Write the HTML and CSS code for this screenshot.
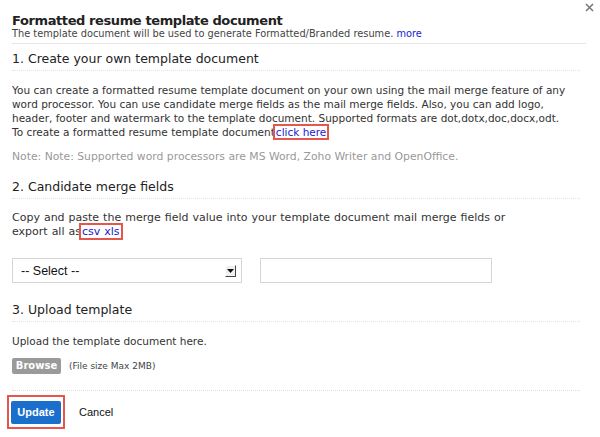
FILE: index.html
```html
<!DOCTYPE html>
<html>
<head>
<meta charset="utf-8">
<link rel="stylesheet" href="styles.css">
</head>
<body>
<div class="dialog">
  <span class="close"><svg width="9" height="9" viewBox="0 0 9 9"><path d="M1 1L8 8M8 1L1 8" stroke="#7a7a7a" stroke-width="1.6"/></svg></span>
  <div class="header">
    <div class="title">Formatted resume template document</div>
    <div class="subtitle">The template document will be used to generate Formatted/Branded resume. <a class="link" href="#">more</a></div>
  </div>

  <div class="sec-head first">1. Create your own template document</div>
  <p class="para">You can create a formatted resume template document on your own using the mail merge feature of any word processor. You can use candidate merge fields as the mail merge fields. Also, you can add logo, header, footer and watermark to the template document. Supported formats are dot,dotx,doc,docx,odt.<br>To create a formatted resume template document<a class="link boxed" href="#">click here</a></p>
  <p class="note">Note: Note: Supported word processors are MS Word, Zoho Writer and OpenOffice.</p>

  <div class="sec-head second">2. Candidate merge fields</div>
  <p class="para copy">Copy and paste the merge field value into your template document mail merge fields or<br>export all as<a class="link boxed" href="#">csv xls</a></p>
  <div class="fields">
    <div class="select">
      <span>-- Select --</span>
      <span class="arrow"><svg width="7" height="4" viewBox="0 0 7 4"><path d="M0 0H7L3.5 4Z" fill="#111"/></svg></span>
    </div>
    <div class="input"></div>
  </div>

  <div class="sec-head third">3. Upload template</div>
  <p class="para upload">Upload the template document here.</p>
  <div class="browse-row">
    <span class="browse">Browse</span>
    <span class="size">(File size Max 2MB)</span>
  </div>

  <div class="footer">
    <span class="update-wrap"><span class="update">Update</span></span>
    <span class="cancel">Cancel</span>
  </div>
</div>
</body>
</html>
```
FILE: styles.css
```css
html, body {
  margin: 0;
  padding: 0;
  background: #fff;
}
body {
  font-family: "DejaVu Sans", Verdana, sans-serif;
  color: #333;
}
.dialog {
  position: relative;
  width: 574px;
  padding: 0 0 0 12px;
}
.close {
  position: absolute;
  left: 585px;
  top: 3px;
  line-height: 0;
}
.header {
  padding-top: 13px;
  padding-bottom: 3px;
  border-bottom: 1px solid #e6e6e6;
}
.title {
  font-size: 13px;
  letter-spacing: -0.4px;
  font-weight: bold;
  line-height: 15px;
  color: #222;
}
.subtitle {
  font-size: 9.8px;
  line-height: 12px;
  color: #444;
}
.link {
  color: #1a1ad0;
  text-decoration: none;
}
.sec-head {
  font-size: 12.5px;
  line-height: 18px;
  color: #222;
  padding-bottom: 2px;
  border-bottom: 1px dotted #e2e2e2;
  width: 568px;
}
.sec-head.first { margin-top: 6px; }
.sec-head.second { margin-top: 14px; }
.sec-head.third { margin-top: 18px; }
.para {
  margin: 12px 0 0;
  font-size: 10.5px;
  line-height: 14px;
  color: #333;
}
.para.copy {
  font-size: 11px;
  word-spacing: 0.5px;
}
.boxed {
  outline: 2px solid #e5574d;
  outline-offset: 0;
  padding: 0 1px;
}
.note {
  margin: 11px 0 0;
  font-size: 10.8px;
  line-height: 14px;
  color: #999;
}
.fields {
  display: flex;
  gap: 18px;
  margin-top: 19px;
}
.select {
  box-sizing: border-box;
  width: 230px;
  height: 25px;
  border: 1px solid #d6d6d6;
  display: flex;
  align-items: center;
  justify-content: space-between;
  padding: 0 5px 0 8px;
  font-family: "Liberation Sans", Arial, sans-serif;
  font-size: 12.5px;
  color: #111;
}
.arrow {
  box-sizing: border-box;
  width: 11px;
  height: 12px;
  background: #f0f0f0;
  border-right: 1px solid #444;
  border-bottom: 1px solid #444;
  border-top: 1px solid #fff;
  border-left: 1px solid #fff;
  display: flex;
  align-items: center;
  justify-content: center;
}
.arrow svg { display: block; }
.input {
  box-sizing: border-box;
  width: 232px;
  height: 25px;
  border: 1px solid #d6d6d6;
}
.upload { margin-top: 12px; }
.browse-row {
  display: flex;
  align-items: center;
  gap: 8px;
  margin-top: 10px;
  height: 16px;
}
.browse {
  display: inline-block;
  background: #9a9a9a;
  color: #fff;
  font-weight: bold;
  font-size: 10px;
  line-height: 16px;
  width: 49px;
  text-align: center;
  border-radius: 2px;
}
.size {
  font-size: 9px;
  color: #444;
}
.footer {
  margin-top: 16px;
  border-top: 1px dotted #dcdcdc;
  width: 568px;
  display: flex;
  align-items: center;
  gap: 14px;
  padding-top: 4px;
}
.update-wrap {
  display: inline-block;
  border: 2px solid #e5574d;
  padding: 4px 2px 3px;
  margin-left: -5px;
}
.update {
  display: block;
  background: #1a6fcc;
  color: #fff;
  font-family: "Liberation Sans", Arial, sans-serif;
  font-weight: bold;
  font-size: 11px;
  line-height: 23px;
  width: 50px;
  text-align: center;
  border-radius: 2px;
}
.cancel {
  font-family: "Liberation Sans", Arial, sans-serif;
  font-size: 11px;
  color: #111;
}
```
